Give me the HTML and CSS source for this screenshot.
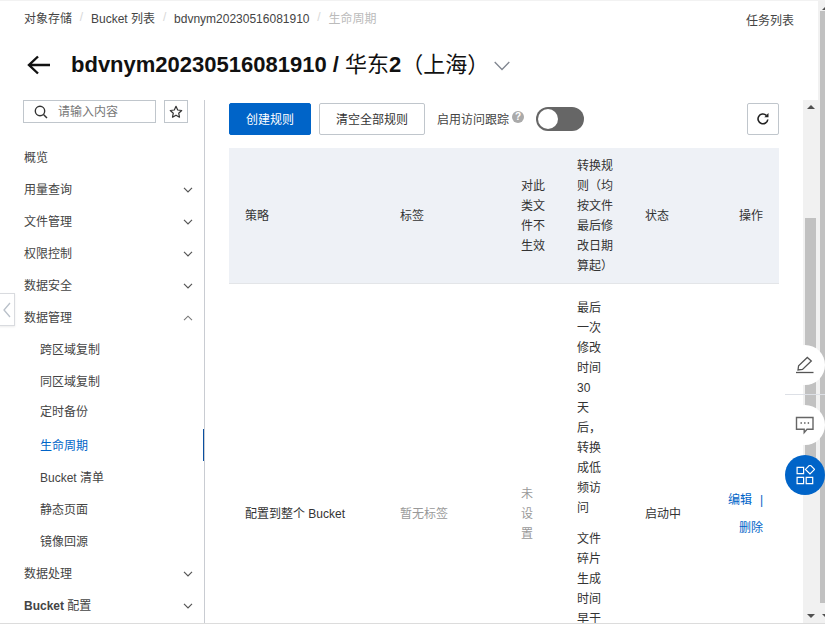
FILE: index.html
```html
<!DOCTYPE html>
<html lang="zh-CN">
<head>
<meta charset="utf-8">
<title>生命周期</title>
<link rel="stylesheet" href="styles.css">
</head>
<body>
<div class="page">
  <div class="frame">
    <header class="head">
      <div class="crumb-row">
        <nav class="crumbs">
          <a class="crumb">对象存储</a><i class="sep">/</i>
          <a class="crumb">Bucket 列表</a><i class="sep">/</i>
          <a class="crumb">bdvnym20230516081910</a><i class="sep">/</i>
          <span class="crumb current">生命周期</span>
        </nav>
        <a class="tasks">任务列表</a>
      </div>
      <div class="title-row">
        <svg class="back" width="24" height="20" viewBox="0 0 24 20"><path d="M23 10H2M11 1.5 2 10l9 8.500" fill="none" stroke="#111" stroke-width="2.400"/></svg>
        <h1 class="title">bdvnym20230516081910 / <span class="title-cjk">华东</span>2<span class="title-cjk">（上海）</span></h1>
        <svg class="title-caret" width="16" height="10" viewBox="0 0 16 10"><path d="M.7 1 8 8.500 15.300 1" fill="none" stroke="#808690" stroke-width="1.300"/></svg>
      </div>
    </header>
    <div class="body">
      <aside class="side">
        <div class="search-row">
          <div class="search">
            <svg width="14" height="14" viewBox="0 0 14 14"><circle cx="6" cy="6" r="4.700" fill="none" stroke="#333" stroke-width="1.400"/><path d="m9.500 9.500 3.500 3.500" stroke="#333" stroke-width="1.500"/></svg>
            <span class="placeholder">请输入内容</span>
          </div>
          <button class="star-btn">
            <svg width="14" height="14" viewBox="0 0 14 14"><path d="M7 1.300 8.700 5l4 .5-3 2.700.8 4L7 10.200l-3.500 2 .8-4-3-2.700 4-.5z" fill="none" stroke="#333" stroke-width="1.200" stroke-linejoin="round"/></svg>
          </button>
        </div>
        <ul class="menu">
          <li class="item">概览</li>
          <li class="item">用量查询<svg class="caret" width="10" height="6" viewBox="0 0 10 6"><path d="m1 .8 4 4 4-4" fill="none" stroke="#555" stroke-width="1.200"/></svg></li>
          <li class="item">文件管理<svg class="caret" width="10" height="6" viewBox="0 0 10 6"><path d="m1 .8 4 4 4-4" fill="none" stroke="#555" stroke-width="1.200"/></svg></li>
          <li class="item">权限控制<svg class="caret" width="10" height="6" viewBox="0 0 10 6"><path d="m1 .8 4 4 4-4" fill="none" stroke="#555" stroke-width="1.200"/></svg></li>
          <li class="item">数据安全<svg class="caret" width="10" height="6" viewBox="0 0 10 6"><path d="m1 .8 4 4 4-4" fill="none" stroke="#555" stroke-width="1.200"/></svg></li>
          <li class="item">数据管理<svg class="caret" width="10" height="6" viewBox="0 0 10 6"><path d="m1 5.200 4-4 4 4" fill="none" stroke="#777" stroke-width="1.100"/></svg></li>
          <li class="item sub">跨区域复制</li>
          <li class="item sub">同区域复制</li>
          <li class="item sub lifted">定时备份</li>
          <li class="item sub active">生命周期</li>
          <li class="item sub">Bucket 清单</li>
          <li class="item sub">静态页面</li>
          <li class="item sub">镜像回源</li>
          <li class="item">数据处理<svg class="caret" width="10" height="6" viewBox="0 0 10 6"><path d="m1 .8 4 4 4-4" fill="none" stroke="#555" stroke-width="1.200"/></svg></li>
          <li class="item"><span><b class="strong">Bucket</b> 配置</span><svg class="caret" width="10" height="6" viewBox="0 0 10 6"><path d="m1 .8 4 4 4-4" fill="none" stroke="#555" stroke-width="1.200"/></svg></li>
        </ul>
      </aside>
      <main class="main">
        <div class="toolbar">
          <button class="btn primary">创建规则</button>
          <button class="btn">清空全部规则</button>
          <span class="track-label">启用访问跟踪</span>
          <span class="help">?</span>
          <span class="switch"><span class="knob"></span></span>
          <button class="btn refresh">
            <svg width="14" height="14" viewBox="0 0 14 14"><path d="M11.800 7.500A4.900 4.900 0 1 1 10.300 3.300" fill="none" stroke="#222" stroke-width="1.600"/><path d="M12.500 1v4.200H8.300z" fill="#222"/></svg>
          </button>
        </div>
        <table class="rules">
          <colgroup>
            <col class="c-scope"><col class="c-tag"><col class="c-except"><col class="c-rule"><col class="c-state"><col>
          </colgroup>
          <thead>
            <tr>
              <th>策略</th>
              <th>标签</th>
              <th>对此类文件不生效</th>
              <th>转换规则（均按文件最后修改日期算起）</th>
              <th>状态</th>
              <th class="right">操作</th>
            </tr>
          </thead>
          <tbody>
            <tr>
              <td>配置到整个 Bucket</td>
              <td class="muted">暂无标签</td>
              <td class="muted"><span class="narrow">未设置</span></td>
              <td class="rule-cell">
                <p class="rule-text">最后一次修改时间 30 天后，转换成低频访问</p>
                <p class="rule-text">文件碎片生成时间早于</p>
              </td>
              <td>启动中</td>
              <td class="right ops">
                <div class="op"><a class="link">编辑</a><span class="pipe">|</span></div>
                <div class="op"><a class="link">删除</a></div>
              </td>
            </tr>
          </tbody>
        </table>
      </main>
      <div class="inner-bar">
        <span class="arrow up"></span>
        <span class="inner-thumb"></span>
        <span class="arrow down"></span>
      </div>
    </div>
  </div>
  <div class="outer-bar">
    <span class="arrow up"></span>
    <span class="outer-thumb"></span>
    <span class="arrow down"></span>
  </div>
</div>
<button class="collapse">
  <svg width="8" height="16" viewBox="0 0 8 16"><path d="M7 1 1 8l6 7" fill="none" stroke="#b9c0c9" stroke-width="1.300"/></svg>
</button>
<div class="float-tools">
  <div class="fab">
    <svg width="20" height="20" viewBox="0 0 20 20"><path d="M3 15l.6-4.300L12.300 2.500l4 3.500L7.500 14.500z" fill="none" stroke="#555" stroke-width="1.300"/><path d="M1 17.500h17.500" stroke="#555" stroke-width="1.300"/></svg>
  </div>
  <span class="fab-rule"></span>
  <div class="fab">
    <svg width="20" height="20" viewBox="0 0 20 20"><path d="M1.500 2.500h16.500v11.700h-6l-2.800 3.400v-3.400H1.500z" fill="none" stroke="#666" stroke-width="1.400"/><path d="M5.500 8h1.400M9.100 8h1.400M12.700 8h1.400" stroke="#555" stroke-width="1.500"/></svg>
  </div>
  <div class="fab blue">
    <svg width="20" height="20" viewBox="0 0 20 20"><path d="M2.100 2.300h6.500v6.300H2.100zM2.100 12.300h6.500v6.300H2.100zM11.200 12.300h6.500v6.300h-6.500z" fill="none" stroke="#fff" stroke-width="1.200"/><path d="m15 -.2 4.600 4.600L15 9l-4.600-4.600z" fill="none" stroke="#fff" stroke-width="1.200"/></svg>
  </div>
</div>
</body>
</html>
```
FILE: styles.css
```css
* { box-sizing: border-box; }
html, body { margin: 0; padding: 0; height: 624px; overflow: hidden; background: #fff; }
body { font: 12px/20px "Liberation Sans", "Noto Sans CJK SC", sans-serif; color: #333; position: relative; }
ul, p, h1 { margin: 0; padding: 0; list-style: none; }
button { font: inherit; color: inherit; background: #fff; cursor: pointer; }

.page { display: flex; height: 624px; border-top: 1px solid #f2f2f2; border-bottom: 1px solid #dcdcdc; }
.frame { width: 818px; display: flex; flex-direction: column; min-height: 0; }

.head { height: 99px; padding: 0 24px; flex: none; }
.crumb-row { display: flex; justify-content: space-between; height: 36px; }
.crumbs { display: flex; padding-top: 8px; height: 30px; }
.crumb { color: #444; }
.crumb.current { color: #bbb; }
.sep { font-style: normal; color: #d8d8d8; width: 19px; text-align: center; margin-top: -2px; }
.tasks { color: #444; padding-top: 10px; }
.title-row { display: flex; align-items: center; height: 56px; }
.back { margin: 0 20px 0 3px; flex: none; }
.title { font-size: 22px; line-height: 32px; font-weight: 700; color: #111; white-space: nowrap; }
.title-cjk { font-weight: 400; }
.title-caret { margin-left: 5px; margin-top: 2px; }

.body { flex: 1; display: flex; min-height: 0; }

.side { width: 205px; flex: none; border-right: 1px solid #c9ccd2; padding-left: 23px; position: relative; }
.search-row { display: flex; gap: 8px; height: 23px; }
.search { width: 133px; border: 1px solid #c0c6cc; display: flex; align-items: center; padding-left: 10px; gap: 10px; }
.placeholder { color: #777; padding-top: 1px; }
.star-btn { width: 24px; height: 23px; padding: 0; border: 1px solid #c0c6cc; display: flex; align-items: center; justify-content: center; }
.menu { margin-top: 19px; }
.item { height: 32px; display: flex; align-items: center; justify-content: space-between; padding: 0 11px 0 1px; color: #444; }
.caret { flex: none; }
.sub { padding-left: 17px; }
.lifted { padding-bottom: 4px; }
.active { color: #0064c8; position: relative; }
.active::after { content: ""; position: absolute; right: 0; top: -1px; width: 1px; height: 32px; background: #0a4fa0; }
.strong { font-weight: 700; }

.main { width: 598px; flex: none; padding: 3px 24px 0; overflow: hidden; }
.toolbar { display: flex; align-items: center; height: 32px; }
.btn { height: 32px; width: 106px; margin-left: 8px; padding: 1px 0 0; border: 1px solid #c0c6cc; border-radius: 2px; color: #333; }
.btn.primary { margin-left: 0; width: 82px; background: #0064c8; border-color: #0064c8; color: #fff; }
.track-label { margin-left: 12px; color: #444; padding-top: 2px; }
.help { width: 12px; height: 12px; margin: -4px 0 0 3px; border-radius: 50%; background: #aaa; color: #fff; font-size: 10px; line-height: 12px; font-weight: 700; text-align: center; }
.switch { width: 48px; height: 24px; margin-left: 12px; border-radius: 12px; background: #666; padding: 2px; }
.knob { display: block; width: 20px; height: 20px; border-radius: 50%; background: #fff; }
.btn.refresh { width: 32px; margin-left: auto; padding: 0; display: flex; align-items: center; justify-content: center; }

.rules { margin-top: 13px; width: 550px; table-layout: fixed; border-collapse: collapse; }
.c-scope { width: 155px; }
.c-tag { width: 121px; }
.c-except { width: 56px; }
.c-rule { width: 68px; }
.c-state { width: 83px; }
.rules th { background: #eef1f6; font-weight: 400; color: #333; text-align: left; padding: 8px 16px 7px; border-bottom: 1px solid #e3e5e8; }
.rules td { padding: 2px 16px 0; vertical-align: middle; height: 458px; color: #333; }
.rules .right { text-align: right; }
.rules .muted { color: #999; }
.narrow { display: block; width: 13px; }
.rules .rule-cell { vertical-align: top; padding-top: 14px; }
.rule-text { width: 28px; margin-bottom: 11px; }
.op { line-height: 28px; white-space: nowrap; }
.link { color: #0064c8; }
.pipe { color: #0064c8; margin-left: 8px; }

.inner-bar { width: 15px; flex: none; background: #f1f1f1; position: relative; padding: 118px 2px 0; }
.inner-thumb { display: block; width: 11px; height: 262px; background: #c1c1c1; }
.outer-bar { width: 7px; flex: none; background: #f1f1f1; position: relative; padding: 10px 0 0 2px; overflow: hidden; }
.outer-thumb { display: block; width: 11px; height: 592px; background: #c1c1c1; }
.arrow { position: absolute; left: 3.500px; width: 0; height: 0; border-left: 4px solid transparent; border-right: 4px solid transparent; }
.arrow.up { border-bottom: 4px solid #505050; top: 5px; }
.arrow.down { border-top: 4px solid #505050; bottom: 5px; }

.collapse { position: absolute; left: -1px; top: 293px; width: 16px; height: 33px; padding: 0; border: 1px solid #d9dbdf; box-shadow: 0 1px 2px rgba(0,0,0,.08); display: flex; align-items: center; justify-content: center; }

.float-tools { position: absolute; right: 0; top: 345px; width: 40px; display: flex; flex-direction: column; align-items: center; }
.fab { width: 40px; height: 40px; border-radius: 50%; background: #fff; display: flex; align-items: center; justify-content: center; }
.fab.blue { background: #0064c8; margin-top: 10px; }
.fab-rule { display: block; width: 40px; height: 1px; margin: 9px 0 10px; background: #dde0e6; }
```
